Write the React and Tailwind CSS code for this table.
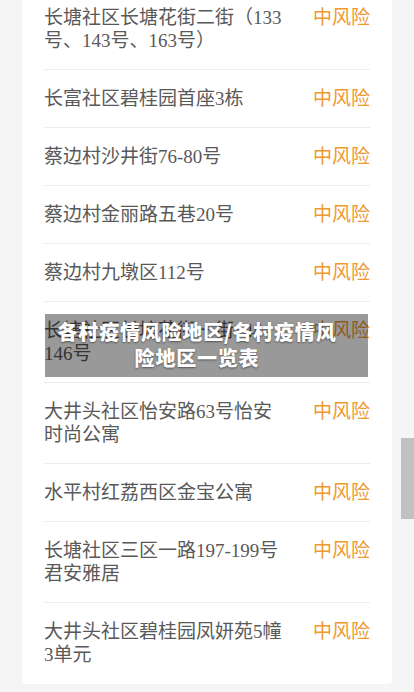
const rows = [
  { address: '长塘社区长塘花街二街（133号、143号、163号）', level: '中风险' },
  { address: '长富社区碧桂园首座3栋', level: '中风险' },
  { address: '蔡边村沙井街76-80号', level: '中风险' },
  { address: '蔡边村金丽路五巷20号', level: '中风险' },
  { address: '蔡边村九墩区112号', level: '中风险' },
  { address: '长塘社区长塘花街一街144-146号', level: '中风险' },
  { address: '大井头社区怡安路63号怡安时尚公寓', level: '中风险' },
  { address: '水平村红荔西区金宝公寓', level: '中风险' },
  { address: '长塘社区三区一路197-199号君安雅居', level: '中风险' },
  { address: '大井头社区碧桂园凤妍苑5幢3单元', level: '中风险' },
];

export default function App() {
  return (
    <div className="relative flex min-h-[692px] flex-col bg-[#f5f5f5] px-[22px] pb-[8px] font-['Liberation_Serif','Noto_Sans_CJK_SC',serif]">
      {/* list card, scrolled a little past its top */}
      <div className="-mt-[11px] rounded-[4px] bg-white px-[22px] shadow-[0_0_2px_rgba(0,0,0,0.04)]">
        {rows.map((row, i) => (
          <div
            key={i}
            className="flex items-start justify-between border-b border-[#ececec] pt-[17px] pb-[17px] text-[19px] leading-[23px] last:border-transparent"
          >
            <div className="w-[242px] text-[#595959]">{row.address}</div>
            <div className="text-[#f0982e]">{row.level}</div>
          </div>
        ))}
      </div>

      {/* title caption over the list */}
      <div className="absolute left-[45px] top-[314px] w-[323px] bg-black/40 pt-[5px] pb-[6px] pl-[6px] pr-[25px] text-center font-['Noto_Sans_CJK_SC',sans-serif] text-[20px] font-black leading-[26px] tracking-[0.8px] text-white [text-shadow:0_1px_2px_rgba(0,0,0,0.45)]">
        各村疫情风险地区/各村疫情风险地区一览表
      </div>

      {/* scrollbar thumb */}
      <div className="fixed right-0 top-[438px] h-[81px] w-[13px] bg-[#c1c1c1]" />
    </div>
  );
}
